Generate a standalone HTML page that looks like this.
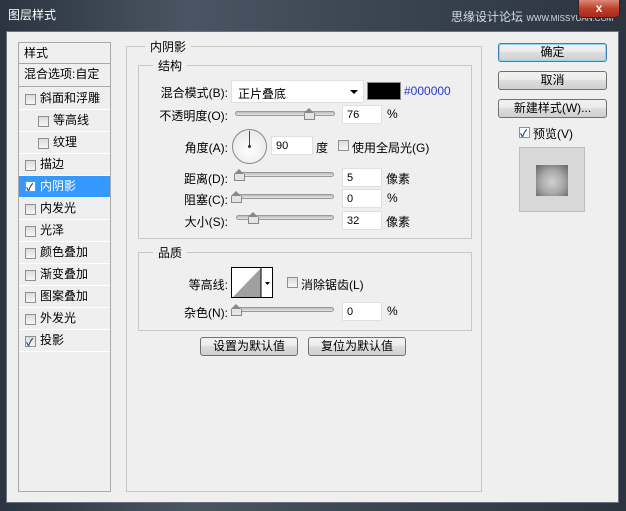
<!DOCTYPE html>
<html><head><meta charset="utf-8"><style>
*{margin:0;padding:0;box-sizing:border-box}
body{width:626px;height:511px;overflow:hidden;background:#2e3845;font-family:"Liberation Sans","Noto Sans CJK SC",sans-serif;font-size:12px;color:#000;position:relative}
.a{position:absolute;white-space:nowrap}
#frame{position:absolute;left:0;top:0;width:626px;height:511px;background:linear-gradient(90deg,#2b3440 0%,#4a5563 30%,#3a4552 60%,#2c3440 100%)}
#client{position:absolute;left:6px;top:31px;width:613px;height:472px;background:#efefef;border:1px solid #6a737e}
.gb{position:absolute;border:1px solid #c8c8c8}
.lg{position:absolute;background:#efefef;padding:0 5px;top:-9px;font-size:12px}
.cb{position:absolute;width:11px;height:11px;border:1px solid #8e8f8f;background:linear-gradient(#dcdcdc,#f6f6f6)}
.cb.on::after{content:"✓";position:absolute;left:0;top:-3px;font-size:10px;color:#1c3d8a;font-weight:bold}
.row{position:absolute;left:19px;width:91px;height:22px;border-bottom:1px solid #fff;line-height:21px}
.btn{position:absolute;height:19px;border:1px solid #707070;border-radius:3px;background:linear-gradient(#f2f2f2 0%,#ebebeb 45%,#dddddd 50%,#cfcfcf 100%);text-align:center;line-height:17px;font-size:12px}
.in{position:absolute;height:19px;background:#fff;border:1px solid #e0e0e0;padding-left:4px;line-height:18px;font-size:11px}
.sl{position:absolute;height:5px;border:1px solid #999;border-radius:3px;background:linear-gradient(#bbb,#e6e6e6)}
.th{position:absolute;width:11px;height:7px;border:1px solid #888;border-top:none;background:#e4e4e4}
.th::before{content:"";position:absolute;left:-1px;top:-5px;border-left:5.5px solid transparent;border-right:5.5px solid transparent;border-bottom:5px solid #888}
.lb{position:absolute;text-align:right;width:110px}
</style></head><body>
<div id="frame"></div>
<div class="a" style="left:8px;top:6px;color:#fff;font-size:12px">图层样式</div>
<div class="a" style="left:451px;top:8px;color:#d8dde3;font-size:12px">思缘设计论坛 <span style="font-size:8px">WWW.MISSYUAN.COM</span></div>
<div class="a" style="left:578px;top:0;width:42px;height:18px;background:linear-gradient(#d98a7a,#c0402a 50%,#a62a18);border:1px solid #3a2020;border-top:none;border-radius:0 0 4px 4px;color:#fff;text-align:center;font-weight:bold;line-height:16px">x</div>
<div id="client"></div>

<div class="a" style="left:18px;top:42px;width:93px;height:450px;border:1px solid #a8a8a8;background:#efefef"></div>
<div class="row" style="top:43px;height:21px;border-bottom:1px solid #a8a8a8;padding-left:5px">样式</div>
<div class="row" style="top:64px;height:23px;border-bottom:1px solid #a8a8a8;padding-left:5px">混合选项:自定</div>
<div class="row" style="top:88px;padding-left:21px">斜面和浮雕</div><div class="cb" style="left:25px;top:94px"></div>
<div class="row" style="top:110px;padding-left:34px">等高线</div><div class="cb" style="left:38px;top:116px"></div>
<div class="row" style="top:132px;padding-left:34px">纹理</div><div class="cb" style="left:38px;top:138px"></div>
<div class="row" style="top:154px;padding-left:21px">描边</div><div class="cb" style="left:25px;top:160px"></div>
<div class="row" style="top:176px;padding-left:21px;background:#3399ff;color:#fff">内阴影</div><div class="cb on" style="left:25px;top:181px;background:#fff"></div>
<div class="row" style="top:198px;padding-left:21px">内发光</div><div class="cb" style="left:25px;top:204px"></div>
<div class="row" style="top:220px;padding-left:21px">光泽</div><div class="cb" style="left:25px;top:226px"></div>
<div class="row" style="top:242px;padding-left:21px">颜色叠加</div><div class="cb" style="left:25px;top:248px"></div>
<div class="row" style="top:264px;padding-left:21px">渐变叠加</div><div class="cb" style="left:25px;top:270px"></div>
<div class="row" style="top:286px;padding-left:21px">图案叠加</div><div class="cb" style="left:25px;top:292px"></div>
<div class="row" style="top:308px;padding-left:21px">外发光</div><div class="cb" style="left:25px;top:314px"></div>
<div class="row" style="top:330px;padding-left:21px">投影</div><div class="cb on" style="left:25px;top:336px"></div>

<div class="gb" style="left:126px;top:46px;width:356px;height:446px"><div class="lg" style="left:18px">内阴影</div></div>
<div class="gb" style="left:138px;top:65px;width:334px;height:174px"><div class="lg" style="left:14px">结构</div></div>

<div class="lb" style="left:118px;top:84px">混合模式(B):</div>
<div class="a" style="left:231px;top:80px;width:133px;height:23px;background:#fff;border:1px solid #e0e0e0;padding:4px 6px">正片叠底</div>
<div class="a" style="left:350px;top:90px;border-left:4px solid transparent;border-right:4px solid transparent;border-top:4px solid #000"></div>
<div class="a" style="left:367px;top:82px;width:34px;height:18px;background:#000;border:1px solid #888"></div>
<div class="a" style="left:404px;top:84px;color:#2a3acb">#000000</div>

<div class="lb" style="left:118px;top:107px">不透明度(O):</div>
<div class="sl" style="left:235px;top:111px;width:100px"></div>
<div class="th" style="left:304px;top:113px"></div>
<div class="in" style="left:342px;top:105px;width:40px">76</div>
<div class="a" style="left:387px;top:107px">%</div>

<div class="lb" style="left:118px;top:139px">角度(A):</div>
<div class="a" style="left:232px;top:129px;width:35px;height:35px;border-radius:50%;border:1px solid #888;background:radial-gradient(circle at 50% 60%,#fff,#e2e2e2)"></div>
<div class="a" style="left:249px;top:131px;width:1px;height:16px;background:#444"></div>
<div class="a" style="left:248px;top:145px;width:3px;height:3px;background:#333;border-radius:50%"></div>
<div class="in" style="left:271px;top:136px;width:42px">90</div>
<div class="a" style="left:316px;top:139px">度</div>
<div class="cb" style="left:338px;top:140px"></div>
<div class="a" style="left:352px;top:139px">使用全局光(G)</div>

<div class="lb" style="left:118px;top:170px">距离(D):</div>
<div class="sl" style="left:236px;top:172px;width:98px"></div>
<div class="th" style="left:234px;top:174px"></div>
<div class="in" style="left:342px;top:168px;width:40px">5</div>
<div class="a" style="left:386px;top:170px">像素</div>

<div class="lb" style="left:118px;top:191px">阻塞(C):</div>
<div class="sl" style="left:236px;top:194px;width:98px"></div>
<div class="th" style="left:231px;top:196px"></div>
<div class="in" style="left:342px;top:189px;width:40px">0</div>
<div class="a" style="left:387px;top:191px">%</div>

<div class="lb" style="left:118px;top:213px">大小(S):</div>
<div class="sl" style="left:236px;top:215px;width:98px"></div>
<div class="th" style="left:248px;top:217px"></div>
<div class="in" style="left:342px;top:211px;width:40px">32</div>
<div class="a" style="left:386px;top:213px">像素</div>

<div class="gb" style="left:138px;top:252px;width:334px;height:79px"><div class="lg" style="left:14px">品质</div></div>
<div class="lb" style="left:118px;top:276px">等高线:</div>
<div class="a" style="left:231px;top:267px;width:42px;height:31px;border:1px solid #000;background:#fff;overflow:hidden">
<svg width="42" height="31" style="position:absolute;left:0;top:0"><polygon points="0,30 29,0 29,30" fill="#a0a0a0"/><line x1="29" y1="0" x2="29" y2="31" stroke="#000"/><polygon points="33,14 38,14 35.5,17" fill="#000"/></svg></div>
<div class="cb" style="left:287px;top:277px"></div>
<div class="a" style="left:301px;top:276px">消除锯齿(L)</div>
<div class="lb" style="left:118px;top:304px">杂色(N):</div>
<div class="sl" style="left:236px;top:307px;width:98px"></div>
<div class="th" style="left:231px;top:309px"></div>
<div class="in" style="left:342px;top:302px;width:40px">0</div>
<div class="a" style="left:387px;top:304px">%</div>

<div class="btn" style="left:200px;top:337px;width:98px">设置为默认值</div>
<div class="btn" style="left:308px;top:337px;width:98px">复位为默认值</div>

<div class="btn" style="left:498px;top:43px;width:109px;border-color:#3c7fb1;box-shadow:inset 0 0 0 1px #8fd3f5">确定</div>
<div class="btn" style="left:498px;top:71px;width:109px">取消</div>
<div class="btn" style="left:498px;top:99px;width:109px">新建样式(W)...</div>
<div class="cb on" style="left:519px;top:127px;background:#fff"></div>
<div class="a" style="left:533px;top:125px">预览(V)</div>
<div class="a" style="left:519px;top:147px;width:66px;height:65px;background:#d8d8d8;border:1px solid #bdbdbd"></div>
<div class="a" style="left:536px;top:165px;width:32px;height:31px;background:radial-gradient(circle at 50% 55%,#d0d0d0 0%,#a8a8a8 50%,#626262 100%)"></div>
</body></html>
